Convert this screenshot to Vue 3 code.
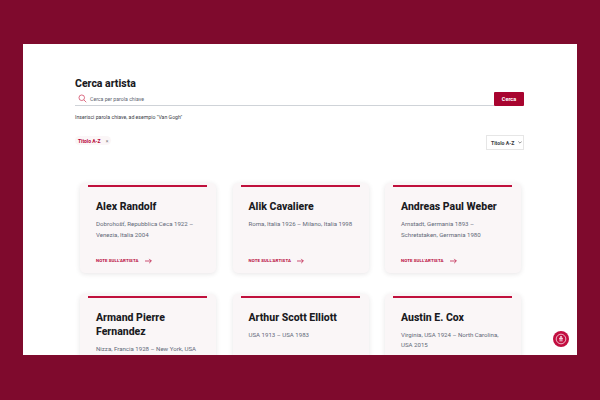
<template>
  <div class="page">
    <main class="panel">
      <h1 class="title">Cerca artista</h1>
      <div class="search-row">
        <div class="search-field">
          <svg class="search-icon" viewBox="0 0 12 12" width="9" height="9">
            <circle cx="5" cy="5" r="3.7" fill="none" stroke="currentColor" stroke-width="1" />
            <path d="M7.8 7.8 11 11" fill="none" stroke="currentColor" stroke-width="1" />
          </svg>
          <span>Cerca per parola chiave</span>
        </div>
        <button class="search-btn">Cerca</button>
      </div>
      <p class="hint">Inserisci parola chiave, ad esempio "Van Gogh"</p>

      <div class="filters">
        <span class="chip">Titolo A-Z <i class="chip-x">×</i></span>
        <div class="select">
          <span>Titolo A-Z</span>
          <svg class="select-caret" viewBox="0 0 6 4" width="4" height="3">
            <path d="M.5.5 3 3 5.5.5" fill="none" stroke="#555" stroke-width="1" />
          </svg>
        </div>
      </div>

      <div class="cards">
        <article v-for="artist in artists" :key="artist.name" class="card">
          <div class="card-bar"></div>
          <h2 class="card-name">{{ artist.name }}</h2>
          <p class="card-info">{{ artist.info }}</p>
          <a class="card-link">
            NOTE SULL'ARTISTA
            <svg viewBox="0 0 10 8" width="7" height="6">
              <path d="M0 4h9M6 1l3 3-3 3" fill="none" stroke="currentColor" stroke-width="1" />
            </svg>
          </a>
        </article>
      </div>

      <button class="access-btn" aria-label="Accessibilità">
        <svg viewBox="0 0 16 16" width="14" height="14">
          <circle cx="8" cy="8" r="5.5" fill="none" stroke="#fff" stroke-width=".8" />
          <circle cx="8" cy="5.6" r="1" fill="#fff" />
          <path d="M5.8 7.2h4.4M7 7.2v3.6M9 7.2v3.6" fill="none" stroke="#fff" stroke-width="1" />
        </svg>
      </button>
    </main>
  </div>
</template>

<script setup>
const artists = [
  { name: 'Alex Randolf', info: 'Dobrohošť, Repubblica Ceca 1922 – Venezia, Italia 2004' },
  { name: 'Alik Cavaliere', info: 'Roma, Italia 1926 – Milano, Italia 1998' },
  { name: 'Andreas Paul Weber', info: 'Arnstadt, Germania 1893 – Schretstaken, Germania 1980' },
  { name: 'Armand Pierre Fernandez', info: 'Nizza, Francia 1928 – New York, USA 2005' },
  { name: 'Arthur Scott Elliott', info: 'USA 1913 – USA 1983' },
  { name: 'Austin E. Cox', info: 'Virginia, USA 1924 – North Carolina, USA 2015' }
]
</script>

<style>
html, body {
  margin: 0;
  background: #7f0a2d;
}
</style>

<style scoped>
.page {
  width: 600px;
  height: 400px;
  box-sizing: border-box;
  padding: 44px 23px 45px;
  background: #7f0a2d;
  font-family: "Roboto", "Liberation Sans", sans-serif;
  overflow: hidden;
}

.panel {
  position: relative;
  height: 311px;
  box-sizing: border-box;
  padding: 33px 53px 0 52px;
  background: #fff;
  overflow: hidden;
}

.title {
  margin: 0 0 1px;
  font-size: 10.5px;
  line-height: 14px;
  font-weight: 800;
  color: #1b1b1f;
}

.search-row {
  display: flex;
  height: 14px;
}

.search-field {
  flex: 1;
  display: flex;
  align-items: center;
  gap: 3px;
  padding-left: 3px;
  border-bottom: 1.5px solid #cfd3d8;
  font-size: 5.2px;
  color: #5d6470;
}

.search-icon {
  color: #d0415f;
}

.search-btn {
  width: 30px;
  padding: 0;
  border: 0;
  border-radius: 1px;
  background: #a8042f;
  color: #fff;
  font-family: inherit;
  font-size: 5.5px;
  font-weight: 700;
}

.hint {
  margin: 7px 0 0;
  font-size: 5.2px;
  line-height: 8px;
  color: #3c4048;
}

.filters {
  display: flex;
  justify-content: space-between;
  align-items: flex-start;
  margin-top: 14px;
  height: 15px;
}

.chip {
  display: flex;
  align-items: center;
  gap: 5px;
  height: 9px;
  margin-top: 1px;
  padding: 0 3px;
  border-radius: 5px;
  background: #fbf6f7;
  color: #b8083a;
  font-size: 5px;
  font-weight: 700;
}

.chip-x {
  font-style: normal;
  font-weight: 400;
  color: #777;
}

.select {
  display: flex;
  align-items: center;
  gap: 4px;
  width: 38px;
  height: 15px;
  box-sizing: border-box;
  padding: 0 0 0 4px;
  border: 1px solid #e6e6e6;
  font-size: 5.2px;
  font-weight: 700;
  color: #3a3d44;
  white-space: nowrap;
}

.select-caret {
  flex: none;
}

.cards {
  display: grid;
  grid-template-columns: repeat(3, 136px);
  column-gap: 16.5px;
  row-gap: 20.5px;
  margin: 33px 0 0 5px;
}

.card {
  position: relative;
  height: 90px;
  box-sizing: border-box;
  padding: 17px 16px 0;
  border-radius: 5px;
  background: #faf6f7;
  box-shadow: 0 1px 5px rgba(60, 40, 50, 0.12);
}

.card-bar {
  position: absolute;
  top: 2px;
  left: 8px;
  right: 9px;
  height: 2px;
  background: #c0103c;
}

.card-name {
  margin: 0;
  font-size: 10.5px;
  line-height: 14.5px;
  font-weight: 800;
  color: #1b1b1f;
}

.card-info {
  margin: 4.5px 0 0;
  font-size: 6.1px;
  line-height: 10.5px;
  color: #626977;
}

.card-link {
  position: absolute;
  left: 16px;
  top: 75px;
  display: flex;
  align-items: center;
  gap: 6px;
  font-size: 4.4px;
  font-weight: 700;
  letter-spacing: 0.1px;
  line-height: 6px;
  color: #b8083a;
}

.access-btn {
  position: absolute;
  right: 8px;
  bottom: 8px;
  width: 16px;
  height: 16px;
  padding: 1px;
  display: flex;
  border: 0;
  border-radius: 50%;
  background: #c20e40;
}
</style>
